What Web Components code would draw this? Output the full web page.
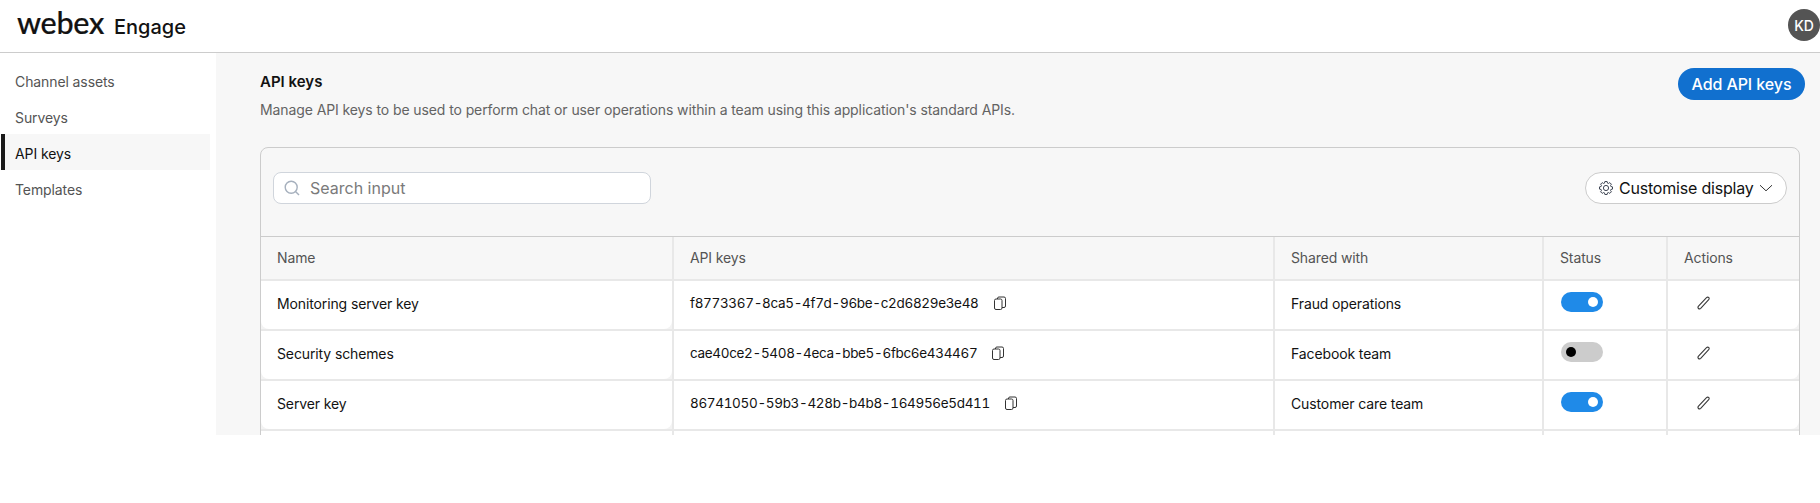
<!DOCTYPE html>
<html lang="en">
<head>
<meta charset="utf-8">
<title>API keys</title>
<style>
  html, body { margin: 0; padding: 0; background: #fff; }
  body { font-family: Inter, "Liberation Sans", sans-serif; font-size: 14px; color: #121212; height: 503px; overflow: hidden; }
</style>
</head>
<body>
<app-shell>
  <app-header slot="header"></app-header>
  <side-nav slot="nav">
    <nav-item>Channel assets</nav-item>
    <nav-item>Surveys</nav-item>
    <nav-item active>API keys</nav-item>
    <nav-item>Templates</nav-item>
  </side-nav>
  <page-head title-text="API keys" description="Manage API keys to be used to perform chat or user operations within a team using this application's standard APIs."></page-head>
  <keys-card>
    <search-box slot="tools" placeholder="Search input"></search-box>
    <display-button slot="tools">Customise display</display-button>
    <key-row header>
      <key-cell>Name</key-cell>
      <key-cell>API keys</key-cell>
      <key-cell>Shared with</key-cell>
      <key-cell>Status</key-cell>
      <key-cell>Actions</key-cell>
    </key-row>
    <key-row name="Monitoring server key" api-key="f8773367-8ca5-4f7d-96be-c2d6829e3e48" shared="Fraud operations" on></key-row>
    <key-row name="Security schemes" api-key="cae40ce2-5408-4eca-bbe5-6fbc6e434467" shared="Facebook team"></key-row>
    <key-row name="Server key" api-key="86741050-59b3-428b-b4b8-164956e5d411" shared="Customer care team" on></key-row>
    <key-row blank></key-row>
  </keys-card>
</app-shell>

<script>
class AppShell extends HTMLElement {
  constructor() {
    super();
    this.attachShadow({ mode: 'open' });
    this.shadowRoot.innerHTML = `
      <style>
        :host { display: block; }
        .body { display: flex; height: 382px; overflow: hidden; }
        .nav { flex: 0 0 216px; }
        main { flex: 1; min-width: 0; background: #f7f7f7; }
      </style>
      <slot name="header"></slot>
      <div class="body">
        <div class="nav"><slot name="nav"></slot></div>
        <main><slot></slot></main>
      </div>
    `;
  }
}

class AppHeader extends HTMLElement {
  constructor() {
    super();
    this.attachShadow({ mode: 'open' });
    this.shadowRoot.innerHTML = `
      <style>
        :host { display: flex; align-items: center; justify-content: space-between; height: 52px; border-bottom: 1px solid #ccc; background: #fff; }
        .brand { display: flex; align-items: baseline; padding: 0 0 8px 17px; }
        .logo { font: 500 30.5px/1 Lato, Inter, sans-serif; color: #121212; letter-spacing: -0.3px; -webkit-text-stroke: 0.2px #121212; }
        .product { font: 500 20px/1 Inter, sans-serif; color: #121212; margin-left: 10px; }
        .avatar { width: 32px; height: 32px; border-radius: 50%; background: #545454; color: #fff; font-size: 14px; font-weight: 500; display: flex; align-items: center; justify-content: center; margin-bottom: 2px; }
      </style>
      <div class="brand"><span class="logo">webex</span><span class="product">Engage</span></div>
      <div class="avatar">KD</div>
    `;
  }
}

class SideNav extends HTMLElement {
  constructor() {
    super();
    this.attachShadow({ mode: 'open' });
    this.shadowRoot.innerHTML = `
      <style>
        :host { display: flex; flex-direction: column; padding: 9px 6px 0 1px; background: #fff; }
      </style>
      <slot></slot>
    `;
  }
}

class NavItem extends HTMLElement {
  constructor() {
    super();
    this.attachShadow({ mode: 'open' });
    this.shadowRoot.innerHTML = `
      <style>
        :host { display: flex; align-items: center; height: 36px; padding: 2px 0 0 14px; color: #545454; font-size: 14px; letter-spacing: -0.1px; box-sizing: border-box; }
        :host([active]) { background: #f7f7f7; border-left: 4px solid #1a1a1a; padding-left: 10px; color: #121212; }
      </style>
      <slot></slot>
    `;
  }
}

class PageHead extends HTMLElement {
  connectedCallback() {
    if (this.shadowRoot) return;
    this.attachShadow({ mode: 'open' });
    this.shadowRoot.innerHTML = `
      <style>
        :host { display: flex; justify-content: space-between; align-items: flex-start; padding: 15px 15px 0 44px; height: 79px; }
        h1 { margin: 4px 0 8px; font-size: 15px; line-height: 20px; font-weight: 600; color: #121212; }
        p { margin: 0; font-size: 14px; line-height: 20px; color: #636363; letter-spacing: -0.1px; }
        button { font: 500 16px/1 Inter, sans-serif; letter-spacing: -0.1px; height: 32px; width: 127px; border: 0; border-radius: 16px; background: #1170cf; color: #fff; padding: 0; }
      </style>
      <div>
        <h1>${this.getAttribute('title-text')}</h1>
        <p>${this.getAttribute('description')}</p>
      </div>
      <button>Add API keys</button>
    `;
  }
}

class KeysCard extends HTMLElement {
  constructor() {
    super();
    this.attachShadow({ mode: 'open' });
    this.shadowRoot.innerHTML = `
      <style>
        :host { display: block; margin: 0 20px 0 44px; border: 1px solid #ccc; border-radius: 8px; }
        .tools { display: flex; justify-content: space-between; align-items: flex-start; padding: 24px 12px 32px; border-bottom: 1px solid #ccc; }
      </style>
      <div class="tools"><slot name="tools"></slot></div>
      <slot></slot>
    `;
  }
}

class SearchBox extends HTMLElement {
  connectedCallback() {
    if (this.shadowRoot) return;
    this.attachShadow({ mode: 'open' });
    this.shadowRoot.innerHTML = `
      <style>
        :host { display: flex; align-items: center; gap: 10px; width: 378px; height: 32px; box-sizing: border-box; padding-left: 10px; background: #fff; border: 1px solid #d0d5dc; border-radius: 8px; color: #7a7a7a; font-size: 16px; }
        svg { width: 16px; height: 16px; flex: none; }
      </style>
      <svg viewBox="0 0 16 16" fill="none" stroke="#a6b0bd" stroke-width="1.4">
        <circle cx="7.2" cy="7.2" r="6"/><path d="M11.500 11.500 15 15"/>
      </svg>
      <span>${this.getAttribute('placeholder')}</span>
    `;
  }
}

// 8-toothed cog outline for the display button
function cogPath(cx, cy, outer, inner) {
  const pts = [];
  for (let i = 0; i < 8; i++) {
    const a = i * Math.PI / 4;
    [[-0.3, inner], [-0.17, outer], [0.17, outer], [0.3, inner]].forEach(([d, r]) => {
      pts.push((cx + r * Math.cos(a + d)).toFixed(2) + ' ' + (cy + r * Math.sin(a + d)).toFixed(2));
    });
  }
  return 'M' + pts.join('L') + 'Z';
}

class DisplayButton extends HTMLElement {
  constructor() {
    super();
    this.attachShadow({ mode: 'open' });
    this.shadowRoot.innerHTML = `
      <style>
        :host { display: flex; align-items: center; width: 202px; height: 32px; box-sizing: border-box; padding-left: 13px; background: #fff; border: 1px solid #ccc; border-radius: 16px; color: #121212; font-size: 16px; letter-spacing: -0.2px; }
        .gear { width: 14px; height: 14px; margin-right: 6px; flex: none; }
        .chev { width: 14px; height: 8px; margin-left: 5px; flex: none; }
      </style>
      <svg class="gear" viewBox="0 0 14 14" fill="none" stroke="#3f4654" stroke-width="1">
        <circle cx="7" cy="7" r="2.6"/>
        <path d="${cogPath(7, 7, 6.6, 5.1)}"/>
      </svg>
      <slot></slot>
      <svg class="chev" viewBox="0 0 14 8" fill="none" stroke="#333" stroke-width="1"><path d="M1 1.200 7 6.800l6-5.600"/></svg>
    `;
  }
}

class KeyCell extends HTMLElement {
  constructor() {
    super();
    this.attachShadow({ mode: 'open' });
    this.shadowRoot.innerHTML = `
      <style>
        :host { display: flex; align-items: center; padding: 0 0 2px 16px; box-sizing: border-box; border-left: 2px solid #e8e8e8; min-width: 0; white-space: nowrap; letter-spacing: -0.12px; }
        :host(:first-of-type) { border-left: 0; }
      </style>
      <slot></slot>
    `;
  }
}

class StatusToggle extends HTMLElement {
  constructor() {
    super();
    this.attachShadow({ mode: 'open' });
    this.shadowRoot.innerHTML = `
      <style>
        :host { display: flex; align-items: center; justify-content: flex-start; width: 42px; height: 20px; margin: 0 0 2px 1px; padding: 0 5px; box-sizing: border-box; border-radius: 10px; background: #ccc; }
        :host([on]) { justify-content: flex-end; background: #1f8ae8; }
        i { width: 10px; height: 10px; border-radius: 50%; background: #000; }
        :host([on]) i { background: #fff; }
      </style>
      <i></i>
    `;
  }
}

const COPY_ICON = `<svg viewBox="0 0 14 14" width="14" height="14" fill="none" stroke="#333" stroke-width="1">
  <rect x="1.500" y="3" width="7.500" height="10.500" rx="1.500"/>
  <path d="M4.500 3V2a1.500 1.500 0 0 1 1.500-1h5a1.500 1.500 0 0 1 1.500 1.500v7.500a1.500 1.500 0 0 1-1.500 1.500H9"/>
</svg>`;

const PENCIL_ICON = `<svg viewBox="0 0 14 14" width="14" height="14" fill="none" stroke="#3a3a3a" stroke-width="1.1">
  <path d="M1.500 12.500c-.6-.6-.6-1.600 0-2.300l8-8.500c.6-.6 1.500-.8 2.200-.2.700.6.600 1.600 0 2.200l-8 8.600c-.6.600-1.600.8-2.200.2z"/>
</svg>`;

// A table row: header rows take cells from their user, data rows build them
class KeyRow extends HTMLElement {
  connectedCallback() {
    if (this.shadowRoot) return;
    this.attachShadow({ mode: 'open' });
    const base = `
        :host { display: grid; grid-template-columns: 411px 601px 269px 124px 133px; height: 50px; box-sizing: border-box; border-bottom: 2px solid #e8e8e8; background: #f3f3f3; color: #121212; }
        :host([header]) { height: 44px; background: #f7f7f7; color: #545454; }`;
    if (this.hasAttribute('header')) {
      this.shadowRoot.innerHTML = `<style>${base}</style><slot></slot>`;
      return;
    }
    const style = `
      <style>${base}
        key-cell { background: #fff; padding-bottom: 4px; }
        .name { border-radius: 0 0 8px 8px; }
        .edit { border-radius: 0 0 8px 0; }
        .key { gap: 14px; font-size: 13.5px; font-variant-numeric: tabular-nums; letter-spacing: -0.33px; }
        .key svg, .edit svg { flex: none; }
        .edit svg { margin-left: 13px; }
      </style>`;
    if (this.hasAttribute('blank')) {
      this.shadowRoot.innerHTML = style + '<key-cell></key-cell>'.repeat(5);
      return;
    }
    const toggle = this.hasAttribute('on') ? '<status-toggle on></status-toggle>' : '<status-toggle></status-toggle>';
    this.shadowRoot.innerHTML = style + `
      <key-cell class="name">${this.getAttribute('name')}</key-cell>
      <key-cell class="key">${this.getAttribute('api-key')}${COPY_ICON}</key-cell>
      <key-cell>${this.getAttribute('shared')}</key-cell>
      <key-cell>${toggle}</key-cell>
      <key-cell class="edit">${PENCIL_ICON}</key-cell>
    `;
  }
}

customElements.define('app-shell', AppShell);
customElements.define('app-header', AppHeader);
customElements.define('side-nav', SideNav);
customElements.define('nav-item', NavItem);
customElements.define('page-head', PageHead);
customElements.define('keys-card', KeysCard);
customElements.define('search-box', SearchBox);
customElements.define('display-button', DisplayButton);
customElements.define('key-cell', KeyCell);
customElements.define('status-toggle', StatusToggle);
customElements.define('key-row', KeyRow);
</script>
</body>
</html>
